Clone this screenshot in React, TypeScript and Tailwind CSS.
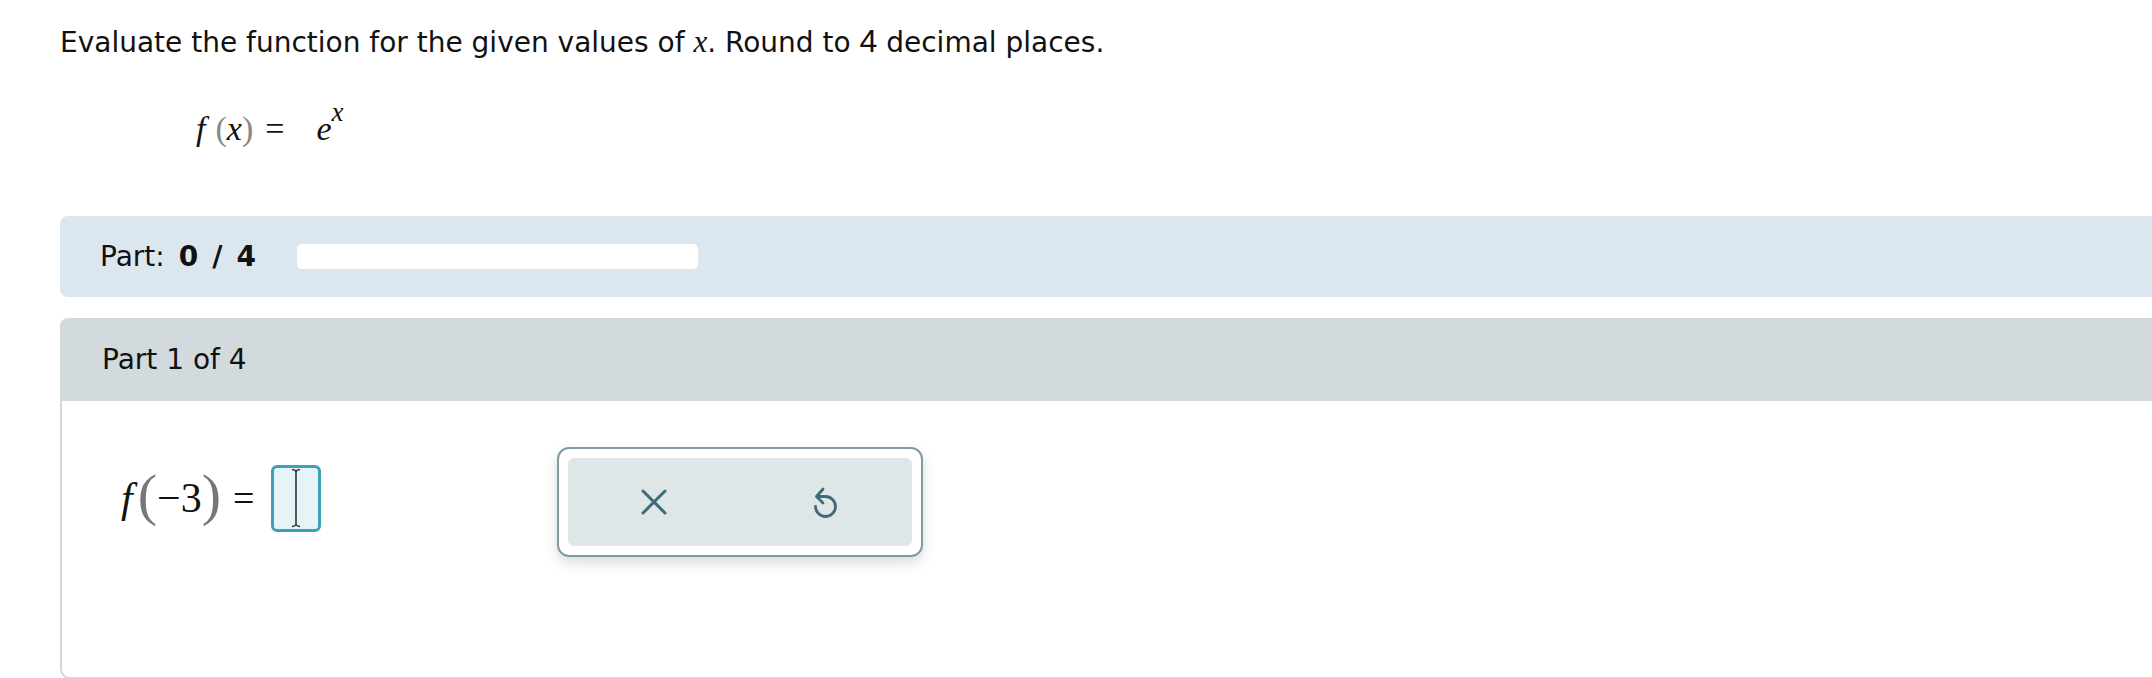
const CloseIcon = () => (
  <svg width="26" height="26" viewBox="0 0 26 26" fill="none">
    <path d="M2 2 L24 24 M24 2 L2 24" stroke="#3d6b79" strokeWidth="3" strokeLinecap="round" />
  </svg>
);

const UndoIcon = () => (
  <svg width="30" height="34" viewBox="0 0 30 34" fill="none">
    <path
      d="M4.5 21.5 A10 10 0 1 0 14.5 11.5 H6"
      stroke="#3d6b79"
      strokeWidth="2.8"
      strokeLinecap="round"
    />
    <path d="M12 4 L5.5 11.5 L12 18" stroke="#3d6b79" strokeWidth="2.8" strokeLinecap="round" strokeLinejoin="round" />
  </svg>
);

const Cursor = () => (
  <svg width="12" height="60" viewBox="0 0 12 60" fill="none">
    <path d="M6 3 V57" stroke="#333" strokeWidth="1.6" />
    <path d="M2 1.5 Q6 2 6 4 Q6 2 10 1.5" stroke="#333" strokeWidth="1.4" />
    <path d="M2 58.5 Q6 58 6 56 Q6 58 10 58.5" stroke="#333" strokeWidth="1.4" />
  </svg>
);

export default function App() {
  return (
    <div className="w-[2152px] h-[678px] overflow-hidden bg-white pl-[60px] text-[#111] font-['DejaVu_Sans',sans-serif]">
      <p className="pt-[23px] text-[28px] leading-[36px] whitespace-nowrap">
        Evaluate the function for the given values of{" "}
        <span className="font-['Liberation_Serif',serif] italic text-[31px]">x</span>. Round to{" "}
        <span className="font-['Liberation_Sans',sans-serif] text-[32px]">4</span> decimal places.
      </p>

      <div className="mt-[45px] h-[44px] pl-[136px] flex items-center text-[34px] font-['Liberation_Serif',serif]">
        <span className="italic">f</span>
        <span className="text-[#888] ml-[10px]">(</span>
        <span className="italic">x</span>
        <span className="text-[#888]">)</span>
        <span className="ml-[12px] mr-[18px]">=</span>
        <span className="italic ml-[14px]">e</span>
        <sup className="italic text-[27px] -top-[16px]">x</sup>
      </div>

      <div className="mt-[66px] h-[81px] bg-[#dbe6ef] rounded-l-[8px] flex items-center pl-[40px] text-[28px]">
        <span>Part:</span>
        <span className="font-bold ml-[14px]">0</span>
        <span className="font-bold ml-[14px]">/</span>
        <span className="font-bold ml-[14px]">4</span>
        <div className="ml-[41px] w-[401px] h-[25px] bg-white rounded-[5px]" />
      </div>

      <div className="mt-[21px] h-[83px] bg-[#d2dadd] rounded-tl-[8px] flex items-center pl-[42px] text-[28px]">
        Part 1 of 4
      </div>

      <div className="h-[278px] border-l-2 border-b-2 border-[#d0dadd] rounded-bl-[10px] flex items-start pt-[46px] pl-[59px]">
        <div className="w-[201px] shrink-0 h-[110px] -mt-[4px] flex items-center font-['Liberation_Serif',serif]">
          <span className="italic text-[42px]">f</span>
          <span className="text-[#777] text-[58px] font-light ml-[5px] leading-none -mt-[6px]">(</span>
          <span className="text-[42px]">−3</span>
          <span className="text-[#777] text-[58px] font-light leading-none -mt-[6px]">)</span>
          <span className="text-[38px] ml-[12px]">=</span>
          <div className="ml-[17px] w-[50px] shrink-0 h-[67px] border-[3px] border-[#3ba1b5] rounded-[6px] bg-[#e6f4f8] flex items-center justify-center">
            <Cursor />
          </div>
        </div>

        <div className="ml-[235px] w-[366px] shrink-0 h-[110px] border-2 border-[#7f9ca5] rounded-[12px] p-[9px] bg-white shadow-[0_6px_14px_rgba(0,0,0,0.14)]">
          <div className="h-full bg-[#dfe6e8] rounded-[6px] grid grid-cols-2">
            <div className="flex items-center justify-center">
              <CloseIcon />
            </div>
            <div className="flex items-center justify-center">
              <UndoIcon />
            </div>
          </div>
        </div>
      </div>
    </div>
  );
}
